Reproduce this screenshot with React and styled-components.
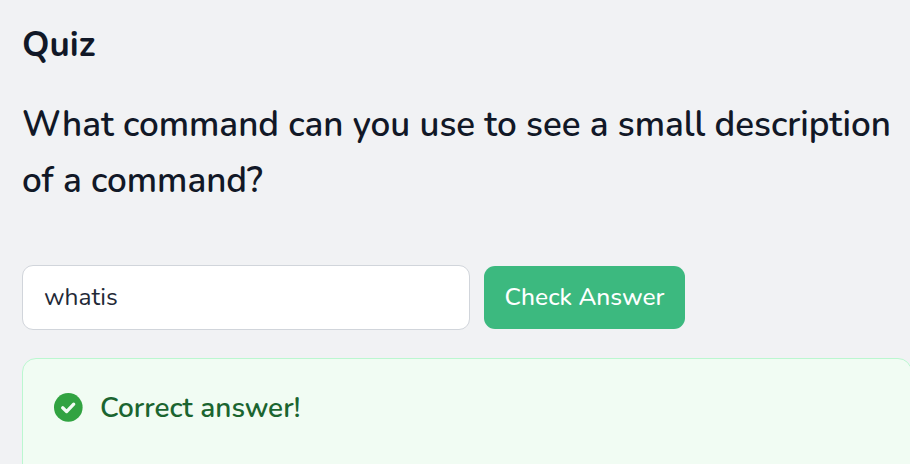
import React from "react";
import styled, { createGlobalStyle } from "styled-components";

const Global = createGlobalStyle`
  * { box-sizing: border-box; }
  body { margin: 0; background: #f1f2f4; font-family: Nunito, "Open Sans", Lato, sans-serif; overflow: hidden; }
`;
const Page = styled.main`
  width: 910px; height: 464px; padding: 23px 0 0 22px; overflow: hidden;
  display: flex; flex-direction: column; background: #f1f2f4; color: #111827;
`;
const Title = styled.h2`
  margin: 0; height: 44px; font: 700 35px/44px Nunito, Lato, sans-serif;
`;
const Question = styled.p`
  margin: 30px 0 0; height: 112px; font: 600 35px/56px Nunito, Lato, sans-serif;
`;
const Line = styled.span`
  display: block; white-space: nowrap;
`;
const AnswerForm = styled.form`
  display: flex; align-items: center; gap: 14px; margin-top: 56px; height: 65px;
`;
const Input = styled.input`
  width: 448px; height: 65px; padding: 0 21px 1px; border: 1px solid #d1d5db; border-radius: 11px;
  background: #fff; color: #1f2937; font: 400 24.5px Nunito, Lato, sans-serif; outline: 0;
`;
const Button = styled.button`
  width: 201px; height: 63px; padding: 0 0 1px; border: 0; border-radius: 11px; background: #3cb97f;
  color: #fff; font: 500 24.5px Nunito, Lato, sans-serif; white-space: nowrap;
`;
const Alert = styled.section`
  width: 890px; height: 140px; flex: none; margin-top: 28px; padding: 31px 30px; display: flex; align-items: flex-start; gap: 17px;
  border: 1px solid #bbf7d0; border-radius: 14px; background: #f1fcf3; color: #1b6530;
`;
const Message = styled.span`
  font: 600 28px/36px Nunito, Lato, sans-serif; white-space: nowrap;
`;
const Check = styled.svg`
  width: 30px; height: 30px; flex: none; margin-top: 2px;
`;

export default function App() {
  return (
    <>
      <Global />
      <Page>
        <Title>Quiz</Title>
        <Question>
          <Line>What command can you use to see a small description</Line>
          <Line>of a command?</Line>
        </Question>
        <AnswerForm>
          <Input defaultValue="whatis" spellCheck={false} />
          <Button type="button">Check Answer</Button>
        </AnswerForm>
        <Alert>
          <Check viewBox="0 0 30 30">
            <circle cx="15.3" cy="15.4" r="14.3" fill="#31a341" />
            <path d="M9.7 15.8l3.9 3.8 7.1-7.4" fill="none" stroke="#f1fcf3" strokeWidth="3.3" strokeLinecap="round" strokeLinejoin="round" />
          </Check>
          <Message>Correct answer!</Message>
        </Alert>
      </Page>
    </>
  );
}
